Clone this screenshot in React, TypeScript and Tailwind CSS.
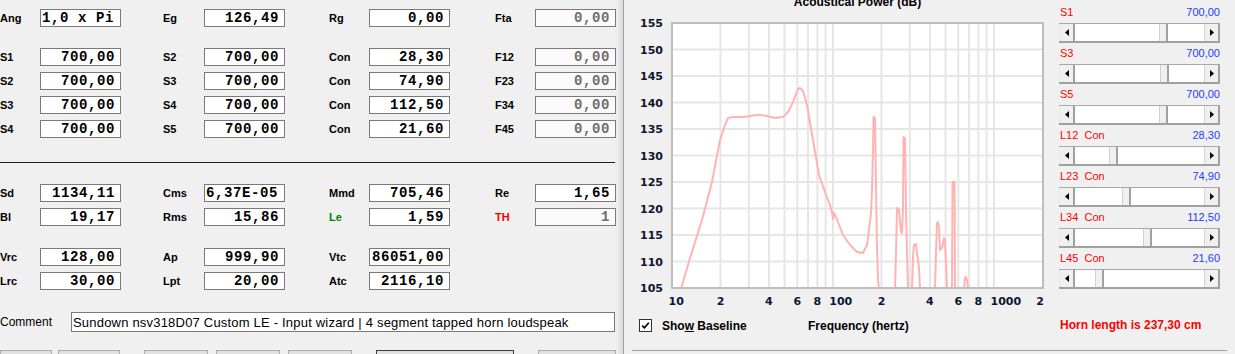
import React from "react";

type F = { label: string; value: string; lc?: string; dis?: boolean; left?: boolean } | null;

const groupW = ["w-[163px]", "w-[166px]", "w-[166px]", "w-[121px]"];
const labelW = ["w-[40px]", "w-[41px]", "w-[40px]", "w-[40px]"];

function ValBox({ value, dis, left }: { value: string; dis?: boolean; left?: boolean }) {
  return (
    <div
      className={`flex h-[18px] w-[81px] shrink-0 items-center overflow-hidden border border-[#7a7a7a] font-['Liberation_Mono',monospace] text-[14px] font-bold leading-none tracking-[0.6px] ${
        dis ? "bg-[#fbfbfb] text-[#6d6d6d]" : "bg-white text-black"
      } ${left ? "justify-start pl-px" : "justify-end pr-[5px]"}`}
    >
      <span className="whitespace-pre">{value}</span>
    </div>
  );
}

function Row({ items }: { items: F[] }) {
  return (
    <div className="flex h-[18px] items-center">
      {items.map((it, i) => (
        <div key={i} className={`flex shrink-0 items-center ${groupW[i]}`}>
          {it && (
            <>
              <span className={`${labelW[i]} shrink-0 text-[11px] font-bold leading-none ${it.lc ?? "text-black"}`}>
                {it.label}
              </span>
              <ValBox value={it.value} dis={it.dis} left={it.left} />
            </>
          )}
        </div>
      ))}
    </div>
  );
}

function SBtn({ right }: { right?: boolean }) {
  return (
    <div
      className={`flex h-full w-[16px] shrink-0 items-center justify-center bg-[#f0f0f0] border-r-2 border-r-[#a0a0a0] ${
        right ? "border-l border-l-[#d4d4d4]" : "border-l border-l-[#e8e8e8]"
      }`}
    >
      <svg width="4" height="7" viewBox="0 0 4 7">
        <path d={right ? "M0 0 L4 3.5 L0 7Z" : "M4 0 L0 3.5 L4 7Z"} fill="#000" />
      </svg>
    </div>
  );
}

function Scroll({ pos }: { pos: number }) {
  return (
    <div className="flex h-[20px] w-[161px] border-t border-b-2 border-t-[#a8a8a8] border-b-[#a0a0a0]">
      <SBtn />
      <div className="relative flex-1 bg-white">
        <div
          className="absolute top-0 bottom-0 w-[9px] border-l border-l-[#d0d0d0] border-r-2 border-r-[#a0a0a0] bg-[#f0f0f0]"
          style={{ left: pos }}
        />
      </div>
      <SBtn right />
    </div>
  );
}

const X = (f: number) => 672 + 161 * Math.log10(f / 10);
const Y = (d: number) => 23 + (155 - d) * 5.3;

const main =
  "M681,289 L690,258 L702,220 L712,182 L720,140 L725,125 L728,118 L733,117 L743,117 L750,116 L758,114.7 L767,116 L775,118 L783,117 L788,112 L793,102 L798,89 L800,88 L803,91 L807,105 L813,140 L819,175 L826,195 L830,205 L832,212 L833,219 L834,213 L836,217 L843,235 L850,245 L857,252 L863,253 L867,245 L869,230 L871,213 L872,190 L873,150 L873.5,117 L875,118 L876,187 L877,247 L878,280 L879,289";
const spikes = [
  "M895,289 L896,253 L897,208 L899,210 L901,232 L902,233 L903,207 L903.5,137 L905,138 L906,210 L907,253 L908,289",
  "M912,289 L913,257 L914,245 L916,244 L917,253 L919,267 L920,289",
  "M935,289 L936,253 L937,223 L938,222 L939,227 L940,250 L942,248 L944,238 L945,240 L946,263 L947,289",
  "M952,289 L952.5,182 L954.5,182 L955,289",
  "M964,289 L965,278 L966,277 L967,280 L968,289",
];

function Chart() {
  const vgrid = [20, 30, 40, 50, 60, 70, 80, 90, 100, 200, 300, 400, 500, 600, 700, 800, 900, 1000];
  const hgrid = [150, 145, 140, 135, 130, 125, 120, 115, 110];
  const ylab = [155, 150, 145, 140, 135, 130, 125, 120, 115, 110, 105];
  const xlab: { t: string; x: number; a: "start" | "middle" }[] = [
    { t: "10", x: 668.5, a: "start" },
    { t: "2", x: X(20), a: "middle" },
    { t: "4", x: X(40), a: "middle" },
    { t: "6", x: X(60), a: "middle" },
    { t: "8", x: X(80), a: "middle" },
    { t: "100", x: 829.3, a: "start" },
    { t: "2", x: X(200), a: "middle" },
    { t: "4", x: X(400), a: "middle" },
    { t: "6", x: X(600), a: "middle" },
    { t: "8", x: X(800), a: "middle" },
    { t: "1000", x: 990.5, a: "start" },
    { t: "2", x: 1040, a: "middle" },
  ];
  const lf = "DejaVu Sans, Verdana, sans-serif";
  return (
    <svg width="431" height="312" viewBox="624 0 431 312" className="block shrink-0">
      <defs>
        <clipPath id="plotclip">
          <rect x="672" y="23" width="371" height="265" />
        </clipPath>
      </defs>
      <text
        x="857.5"
        y="5.5"
        textAnchor="middle"
        fontFamily="Liberation Sans, Arial, sans-serif"
        fontWeight="bold"
        fontSize="12"
        fill="#000"
      >
        Acoustical Power (dB)
      </text>
      <rect x="672" y="23" width="371" height="265" fill="#fff" />
      {vgrid.map((f) => (
        <line key={f} x1={X(f)} x2={X(f)} y1={23} y2={288} stroke="#e6e6e6" strokeWidth="2" />
      ))}
      {hgrid.map((d) => (
        <line key={d} x1={672} x2={1043} y1={Y(d)} y2={Y(d)} stroke="#e6e6e6" strokeWidth="2" />
      ))}
      <g clipPath="url(#plotclip)" fill="none" stroke="#ffb3b3" strokeWidth="2" strokeLinejoin="round">
        <path d={main} />
        {spikes.map((d, i) => (
          <path key={i} d={d} />
        ))}
      </g>
      <rect x="672" y="23" width="371" height="265" fill="none" stroke="#bdbdbd" strokeWidth="2" />
      {ylab.map((d) => (
        <text key={d} x={663} y={Y(d) + 4} textAnchor="end" fontFamily={lf} fontWeight="bold" fontSize="11" fill="#0d1630">
          {d}
        </text>
      ))}
      {xlab.map((l, i) => (
        <text key={i} x={l.x} y={305} textAnchor={l.a} fontFamily={lf} fontWeight="bold" fontSize="11" fill="#0d1630">
          {l.t}
        </text>
      ))}
    </svg>
  );
}

const sliders = [
  { l: "S1", v: "700,00", p: 84 },
  { l: "S3", v: "700,00", p: 85 },
  { l: "S5", v: "700,00", p: 84 },
  { l: "L12  Con", v: "28,30", p: 34 },
  { l: "L23  Con", v: "74,90", p: 47 },
  { l: "L34  Con", v: "112,50", p: 68 },
  { l: "L45  Con", v: "21,60", p: 20 },
];

export default function App() {
  return (
    <div className="flex h-[354px] w-[1235px] overflow-hidden bg-[#f0f0f0] font-['Liberation_Sans',Arial,sans-serif] text-black">
      {/* left panel */}
      <div className="flex w-[616px] shrink-0 flex-col pt-[9px]">
        <Row
          items={[
            { label: "Ang", value: "1,0 x Pi", left: true },
            { label: "Eg", value: "126,49" },
            { label: "Rg", value: "0,00" },
            { label: "Fta", value: "0,00", dis: true },
          ]}
        />
        <div className="mt-[21px] flex flex-col gap-[6px]">
          <Row
            items={[
              { label: "S1", value: "700,00" },
              { label: "S2", value: "700,00" },
              { label: "Con", value: "28,30" },
              { label: "F12", value: "0,00", dis: true },
            ]}
          />
          <Row
            items={[
              { label: "S2", value: "700,00" },
              { label: "S3", value: "700,00" },
              { label: "Con", value: "74,90" },
              { label: "F23", value: "0,00", dis: true },
            ]}
          />
          <Row
            items={[
              { label: "S3", value: "700,00" },
              { label: "S4", value: "700,00" },
              { label: "Con", value: "112,50" },
              { label: "F34", value: "0,00", dis: true },
            ]}
          />
          <Row
            items={[
              { label: "S4", value: "700,00" },
              { label: "S5", value: "700,00" },
              { label: "Con", value: "21,60" },
              { label: "F45", value: "0,00", dis: true },
            ]}
          />
        </div>
        <div className="mt-[24px] h-px w-[615px] shrink-0 bg-[#1a1a1a]" />
        <div className="mt-[21px] flex flex-col gap-[6px]">
          <Row
            items={[
              { label: "Sd", value: "1134,11" },
              { label: "Cms", value: "6,37E-05", left: true },
              { label: "Mmd", value: "705,46" },
              { label: "Re", value: "1,65" },
            ]}
          />
          <Row
            items={[
              { label: "Bl", value: "19,17" },
              { label: "Rms", value: "15,86" },
              { label: "Le", value: "1,59", lc: "text-[#008000]" },
              { label: "TH", value: "1", lc: "text-[#ff0000]", dis: true },
            ]}
          />
        </div>
        <div className="mt-[22px] flex flex-col gap-[6px]">
          <Row
            items={[
              { label: "Vrc", value: "128,00" },
              { label: "Ap", value: "999,90" },
              { label: "Vtc", value: "86051,00" },
              null,
            ]}
          />
          <Row
            items={[
              { label: "Lrc", value: "30,00" },
              { label: "Lpt", value: "20,00" },
              { label: "Atc", value: "2116,10" },
              null,
            ]}
          />
        </div>
        <div className="mt-[22px] flex h-[20px] shrink-0 items-center">
          <span className="w-[71px] shrink-0 text-[12px] leading-none">Comment</span>
          <div className="flex h-[20px] w-[544px] shrink-0 items-center overflow-hidden whitespace-nowrap border border-[#7a7a7a] bg-white pl-px text-[13px] leading-none tracking-[0.2px]">
            Sundown nsv318D07 Custom LE - Input wizard | 4 segment tapped horn loudspeak
          </div>
        </div>
        <div className="mt-[18px] flex h-[24px] shrink-0">
          <div className="h-full w-[52px] shrink-0 border border-[#adadad] bg-[#e1e1e1]" />
          <div className="ml-[6px] h-full w-[62px] shrink-0 border border-[#adadad] bg-[#e1e1e1]" />
          <div className="ml-[24px] h-full w-[64px] shrink-0 border border-[#adadad] bg-[#e1e1e1]" />
          <div className="ml-[8px] h-full w-[64px] shrink-0 border border-[#adadad] bg-[#e1e1e1]" />
          <div className="ml-[8px] h-full w-[64px] shrink-0 border border-[#adadad] bg-[#e1e1e1]" />
          <div className="ml-[24px] h-full w-[138px] shrink-0 border border-[#3c3c3c] bg-[#e1e1e1]" />
          <div className="ml-[24px] h-full w-[78px] shrink-0 border border-[#adadad] bg-[#e1e1e1]" />
        </div>
      </div>

      {/* splitter */}
      <div className="w-[7px] shrink-0 bg-linear-to-r from-[#f0f0f0] to-[#dadada]" />
      <div className="w-px shrink-0 bg-[#a0a0a0]" />

      {/* right area */}
      <div className="flex w-[611px] shrink-0 flex-col">
        <div className="flex h-[350px] shrink-0">
          <div className="flex w-[431px] shrink-0 flex-col">
            <Chart />
            <div className="mt-[7px] flex h-[13px] items-center">
              <div className="flex w-[184px] shrink-0 items-center pl-[15px]">
                <div className="flex h-[13px] w-[13px] items-center justify-center border border-[#333] bg-white">
                  <svg width="9" height="9" viewBox="0 0 9 9">
                    <path d="M1.2 4.6 L3.4 6.8 L7.8 1.8" fill="none" stroke="#000" strokeWidth="1.7" />
                  </svg>
                </div>
                <span className="ml-[10px] text-[12px] font-bold leading-none">
                  Sho<u>w</u> Baseline
                </span>
              </div>
              <span className="text-[12px] font-bold leading-none">Frequency (hertz)</span>
            </div>
          </div>
          <div className="flex w-[180px] shrink-0 flex-col pl-[4px] pt-[2px]">
            {sliders.map((s) => (
              <div key={s.l} className="flex w-[161px] flex-col">
                <div className="flex h-[21px] items-center justify-between pl-px text-[11px] leading-none">
                  <span className="whitespace-pre text-[#ff0000]">{s.l}</span>
                  <span className="text-[#2040ff]">{s.v}</span>
                </div>
                <Scroll pos={s.p} />
              </div>
            ))}
            <div className="mt-[29px] pl-px text-[12px] font-bold leading-[14px] text-[#ff0000]">
              Horn length is 237,30 cm
            </div>
          </div>
        </div>
        <div className="ml-[8px] h-px w-[595px] shrink-0 bg-[#a0a0a0]" />
      </div>
    </div>
  );
}
